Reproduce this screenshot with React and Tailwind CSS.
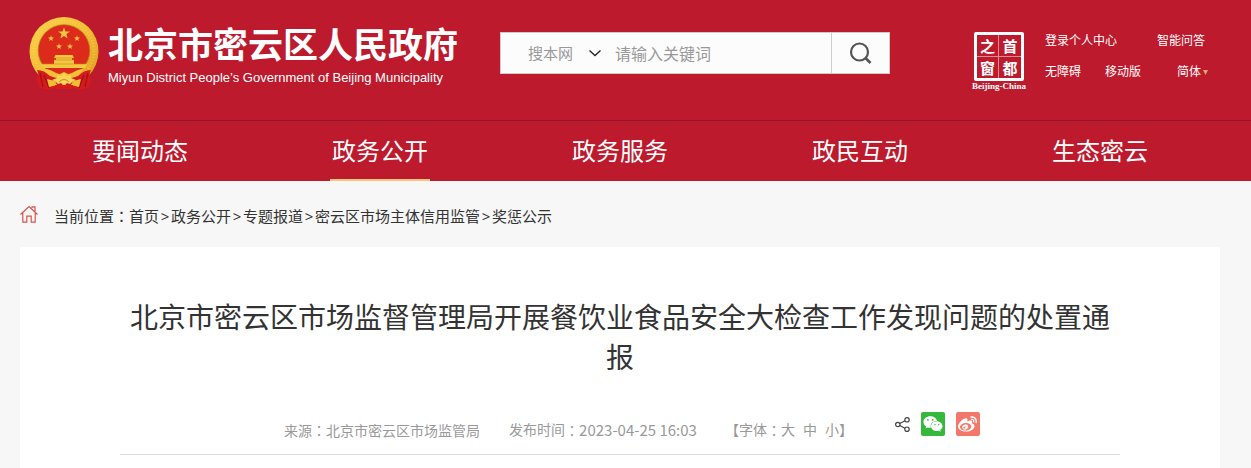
import React, { useState } from 'react';
import { FaWeixin, FaWeibo } from 'react-icons/fa';

const navItems = ['要闻动态', '政务公开', '政务服务', '政民互动', '生态密云'];
const crumbs = ['首页', '政务公开', '专题报道', '密云区市场主体信用监管', '奖惩公示'];
const fontSizes = ['大', '中', '小'];

const STAR = 'M0 -10 L2.4 -3.2 L9.5 -3.1 L3.8 1.2 L5.9 8.1 L0 4 L-5.9 8.1 L-3.8 1.2 L-9.5 -3.1 L-2.4 -3.2 Z';

function Emblem() {
  return (
    <svg className="w-[72px] h-[76px] shrink-0" viewBox="0 0 72 76" aria-hidden="true">
      <defs>
        <linearGradient id="gold" x1="0" y1="0" x2="1" y2="1">
          <stop offset="0" stopColor="#f8d34c" />
          <stop offset="0.5" stopColor="#f2bd32" />
          <stop offset="1" stopColor="#dd9a22" />
        </linearGradient>
      </defs>
      {/* Wreath */}
      <circle cx="36" cy="35.500" r="34.500" fill="url(#gold)" />
      <circle cx="36" cy="35" r="30" fill="none" stroke="#fbe382" strokeWidth="3" strokeDasharray="1 2" opacity="0.35" />
      <circle cx="36" cy="34.500" r="25.800" fill="#dc2a1b" stroke="#b97f1c" strokeWidth="0.800" />
      {/* Stars */}
      <g fill="#f3c443">
        <path d={STAR} transform="translate(36 17.500) scale(.62)" />
        <path d={STAR} transform="translate(23 22.500) scale(.32)" />
        <path d={STAR} transform="translate(49 22.500) scale(.32)" />
        <path d={STAR} transform="translate(31 30.500) scale(.32)" />
        <path d={STAR} transform="translate(42 30.500) scale(.32)" />
      </g>
      {/* Gate tower */}
      <g fill="#f5c840">
        <path d="M27.500 39h17l1.500 3h-20z" />
        <path d="M28 42h16v2h-16z" />
        <path d="M26 44h20v4h-20z" />
        <path d="M13 48h46l-1.500 4h-43z" />
      </g>
      <path d="M14 48h44M26 44h20M27 42h18" stroke="#c98621" strokeWidth="0.600" />
      {/* Ribbons */}
      <path d="M9 54c5 0 9 2 13 6h28c4-4 8-6 13-6-2 4-2 7 1 10-2 2-3 5-3 7-5 3-10 3-14 1H25c-4 2-9 2-14-1 0-2-1-5-3-7 3-3 3-6 1-10z" fill="#d41b1d" />
      <path d="M12 57l3 14M16 59l5 13M60 57l-3 14M56 59l-5 13" stroke="#9e1016" strokeWidth="1.200" />
      {/* Lower sheaves and gear */}
      <path d="M17 53c6 0 11 5 15 5l4-2 4 2c4 0 9-5 15-5-3 7-8 9-14 9h-10c-6 0-11-2-14-9z" fill="#f3c038" />
      <path d="M36 57l3 3 4-1 0 3 5 2-4 2-2 2-3-1-3 3-3-3-3 1-2-2-4-2 5-2 0-3 4 1z" fill="#f8d558" />
      <path d="M27 65l-8-2 2 8 8-2zM45 65l8-2-2 8-8-2z" fill="#f0bd35" />
      <path d="M27 69h18l-2 4h-14z" fill="#d41b1d" />
      <path d="M31 66q5-5 10 0" fill="none" stroke="#c8871c" />
    </svg>
  );
}

function CapitalSeal() {
  return (
    <a href="#" className="flex flex-col items-center w-14 text-white">
      <span className="grid grid-cols-2 grid-rows-2 w-[50px] h-[49px] border-3 border-white rounded-xs leading-none font-['Noto_Sans_CJK_SC',sans-serif] font-bold text-[15px]">
        <span className="flex items-center justify-center border-r border-b border-white/50">之</span>
        <span className="flex items-center justify-center border-b border-white/50">首</span>
        <span className="flex items-center justify-center border-r border-white/50">窗</span>
        <span className="flex items-center justify-center">都</span>
      </span>
      <span className="font-['Liberation_Serif',serif] font-bold text-[9px] leading-[10px] whitespace-nowrap">Beijing-China</span>
    </a>
  );
}

// Full-width colon, centred in its cell
function Colon() {
  return <span className="font-['Noto_Sans_CJK_TC',sans-serif]">：</span>;
}

function SearchBox() {
  const [keyword, setKeyword] = useState('');

  return (
    <form className="flex w-[390px] h-[42px] bg-[#fcfcfc] border border-[#ccc]" onSubmit={(e) => e.preventDefault()}>
      <div className="flex items-center pl-[27px] gap-[15px]">
        <select aria-label="搜索范围" className="appearance-none w-[46px] text-[15px] text-[#999] bg-transparent">
          <option>搜本网</option>
        </select>
        <svg className="w-3 h-2" viewBox="0 0 12 8" fill="none" stroke="#222" strokeWidth="1.300">
          <path d="M.5 1.500L6 6.500 11.500 1.500" />
        </svg>
      </div>
      <input
        type="text"
        aria-label="关键词"
        placeholder="请输入关键词"
        value={keyword}
        onChange={(e) => setKeyword(e.target.value)}
        className="flex-1 min-w-0 pl-[14px] pt-0.5 text-base text-[#333] placeholder:text-[#999] bg-transparent outline-none"
      />
      <button type="submit" aria-label="搜索" className="w-[58px] border-l border-[#ccc] flex items-center justify-center">
        <svg className="w-6 h-6" viewBox="0 0 24 24" fill="none" stroke="#555" strokeWidth="2.200">
          <circle cx="10.500" cy="11" r="8.500" />
          <path d="M16.500 17l5 5" strokeWidth="2.600" />
        </svg>
      </button>
    </form>
  );
}

export default function App() {
  const [active, setActive] = useState('政务公开');

  return (
    <div className="min-h-screen bg-[#f7f7f7] font-['Noto_Sans','Noto_Sans_CJK_SC',sans-serif] text-[#333]">
      <header className="bg-[#bd1a2d] text-white">
        {/* Top bar */}
        <div className="flex items-start h-[120px] pl-7 pr-[31px]">
          <a href="#" className="flex gap-2 w-[472px] pt-4">
            <Emblem />
            <span className="flex flex-col pt-2">
              <span className="font-['Noto_Sans_CJK_SC',sans-serif] font-bold text-[35px] leading-[38px] whitespace-nowrap">北京市密云区人民政府</span>
              <span className="font-['Liberation_Sans',sans-serif] text-[13px] leading-8 whitespace-nowrap">Miyun District People’s Government of Beijing Municipality</span>
            </span>
          </a>
          <div className="pt-8">
            <SearchBox />
          </div>
          <div className="ml-auto flex gap-[18px] pt-8">
            <CapitalSeal />
            <div className="w-[175px] text-xs">
              <div className="flex gap-10 h-[18px] items-center">
                <a href="#">登录个人中心</a>
                <a href="#">智能问答</a>
              </div>
              <div className="flex h-[18px] items-center mt-[13px]">
                <a href="#" className="mr-6">无障碍</a>
                <a href="#" className="mr-9">移动版</a>
                <a href="#" className="flex items-center gap-0.5">
                  简体
                  <svg className="w-[5px] h-[5px]" viewBox="0 0 5 5" fill="#dba56b">
                    <path d="M0 0h5L2.500 5z" />
                  </svg>
                </a>
              </div>
            </div>
          </div>
        </div>

        {/* Main nav */}
        <nav className="border-t border-[#93152a] pl-5 pr-[31px]">
          <ul className="grid grid-cols-5">
            {navItems.map((item) => (
              <li key={item} className="flex justify-center">
                <a
                  href="#"
                  onClick={() => setActive(item)}
                  className={`block w-[100px] h-[60px] pt-0.5 text-center text-2xl leading-[56px] border-b-2 whitespace-nowrap ${item === active ? 'border-[#f3c67e]' : 'border-transparent'}`}
                >
                  {item}
                </a>
              </li>
            ))}
          </ul>
        </nav>
      </header>

      <main className="pl-5 pr-[31px]">
        {/* Breadcrumb */}
        <div className="flex items-center h-[66px] text-[15px]">
          <svg className="w-[18px] h-[18px] mr-4 shrink-0" viewBox="0 0 18 18" fill="none" stroke="#d0584f" strokeWidth="1.200">
            <path d="M.5 9.500L9 1.500l8.500 8M2.800 8v9.200h4v-6h4.400v6h4V8M12 3V1.800h3V6.500" />
          </svg>
          <div className="flex items-center pt-1 whitespace-nowrap">
            <span>当前位置<Colon /></span>
            {crumbs.map((crumb, index) => (
              <React.Fragment key={crumb}>
                {index > 0 && <span className="w-3 text-center">&gt;</span>}
                <a href="#">{crumb}</a>
              </React.Fragment>
            ))}
          </div>
        </div>

        {/* Article */}
        <article className="bg-white px-[100px] pt-[50px] min-h-[221px]">
          <h1 className="text-[28px] leading-10 text-center">
            北京市密云区市场监督管理局开展餐饮业食品安全大检查工作发现问题的处置通报
          </h1>
          <div className="flex justify-center items-start pl-6 mt-[35px] h-[43px] border-b border-[#ddd] text-sm text-[#999] whitespace-nowrap">
            <span className="mr-[29px] pt-2">来源<Colon />北京市密云区市场监管局</span>
            <span className="flex mr-7 pt-2">
              发布时间<Colon />
              <time className="font-['Noto_Sans_CJK_SC',sans-serif] text-[15px] leading-5">2023-04-25 16:03</time>
            </span>
            <span className="flex pt-2">
              【字体<Colon />
              <span className="flex gap-2">
                {fontSizes.map((size) => (
                  <button key={size} type="button">{size}</button>
                ))}
              </span>
              】
            </span>
            <div className="flex items-center gap-[11px] ml-[42px]">
              <button type="button" aria-label="分享">
                <svg className="w-[15px] h-[15px]" viewBox="0 0 15 15" fill="none" stroke="#444" strokeWidth="1.200">
                  <circle cx="2.800" cy="7.500" r="2.200" />
                  <circle cx="12" cy="2.800" r="2.200" />
                  <circle cx="12" cy="12.200" r="2.200" />
                  <path d="M4.800 6.500l5.200-2.700M4.800 8.500l5.200 2.700" />
                </svg>
              </button>
              <button type="button" aria-label="微信" className="w-6 h-6 rounded-xs bg-[#36b83c] text-white flex items-center justify-center">
                <FaWeixin size={20} />
              </button>
              <button type="button" aria-label="微博" className="w-6 h-6 rounded-xs bg-[#f3776a] text-white flex items-center justify-center">
                <FaWeibo size={19} />
              </button>
            </div>
          </div>
        </article>
      </main>
    </div>
  );
}
